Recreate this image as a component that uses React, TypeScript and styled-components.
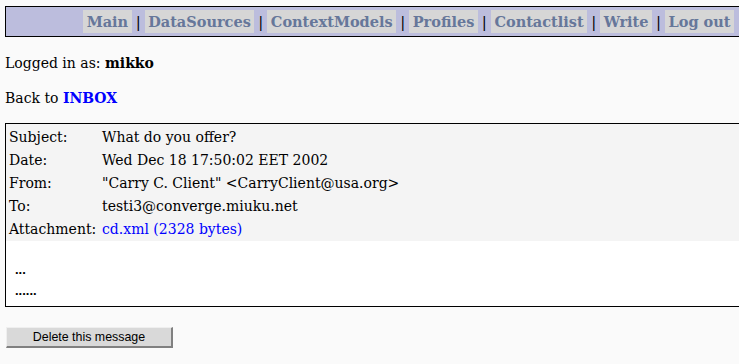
import React from "react";
import styled, { createGlobalStyle } from "styled-components";

const Global = createGlobalStyle`
  html, body { margin: 0; padding: 0; background: #fafafa; }
  body { font-family: "DejaVu Serif", serif; font-size: 14px; color: #000; overflow: hidden; }
`;

const Page = styled.div`
  padding: 6px 0 0 5px;
  width: 760px;
`;

const NavBar = styled.div`
  border: 1px solid #000;
  background: #bcbddd;
  height: 29px;
  display: flex;
  align-items: center;
  justify-content: flex-end;
  padding-right: 30px;
`;

const NavItem = styled.a`
  background: #d6d6d6;
  color: #66779a;
  font-weight: bold;
  font-size: 14.5px;
  text-decoration: none;
  padding: 2px 3.5px 1px;
  height: 20px;
  line-height: 20px;
`;

const Sep = styled.span`
  color: #000;
  margin: 0 4px;
  font-size: 15px;
`;

const Line = styled.p`
  margin: 0;
  font-family: "DejaVu Serif", serif;
  font-size: 14px;
`;

const Logged = styled(Line)`
  margin-top: 18px;
`;

const Back = styled(Line)`
  margin-top: 19px;
`;

const InboxLink = styled.a`
  color: #0000ff;
  font-weight: bold;
  text-decoration: none;
`;

const MessageBox = styled.div`
  margin-top: 17px;
  border: 1px solid #000;
  background: #fff;
`;

const Headers = styled.div`
  background: #f4f4f4;
  padding: 1px 3px 1px;
  display: grid;
  grid-template-columns: 93px 1fr;
  grid-auto-rows: 23px;
  align-items: center;
`;

const Label = styled.span``;
const Value = styled.span``;

const AttachLink = styled.a`
  color: #0000ff;
  text-decoration: none;
`;

const Body = styled.div`
  padding: 18px 9px 5px;
  font-family: "Liberation Sans", sans-serif;
  font-weight: bold;
  font-size: 13px;
  line-height: 21px;
`;

const ButtonRow = styled.div`
  margin-top: 20px;
  padding-left: 1px;
`;

const DeleteButton = styled.button`
  width: 167px;
  height: 21px;
  background: #d9d9d9;
  font-family: "Liberation Sans", sans-serif;
  font-size: 12.4px;
  color: #000;
  border: 1px solid;
  border-color: #efefef #808080 #808080 #efefef;
  border-right-width: 2px;
  border-bottom-width: 2px;
  padding: 0;
`;

const navItems = ["Main", "DataSources", "ContextModels", "Profiles", "Contactlist", "Write", "Log out"];

export default function App() {
  return (
    <>
      <Global />
      <Page>
        <NavBar>
          {navItems.map((n, i) => (
            <React.Fragment key={n}>
              {i > 0 && <Sep>|</Sep>}
              <NavItem href="#">{n}</NavItem>
            </React.Fragment>
          ))}
        </NavBar>
        <Logged>Logged in as: <b>mikko</b></Logged>
        <Back>Back to <InboxLink href="#">INBOX</InboxLink></Back>
        <MessageBox>
          <Headers>
            <Label>Subject:</Label><Value>What do you offer?</Value>
            <Label>Date:</Label><Value>Wed Dec 18 17:50:02 EET 2002</Value>
            <Label>From:</Label><Value>"Carry C. Client" &lt;CarryClient@usa.org&gt;</Value>
            <Label>To:</Label><Value>testi3@converge.miuku.net</Value>
            <Label>Attachment:</Label><Value><AttachLink href="#">cd.xml (2328 bytes)</AttachLink></Value>
          </Headers>
          <Body>
            <div>...</div>
            <div>......</div>
          </Body>
        </MessageBox>
        <ButtonRow>
          <DeleteButton>Delete this message</DeleteButton>
        </ButtonRow>
      </Page>
    </>
  );
}
